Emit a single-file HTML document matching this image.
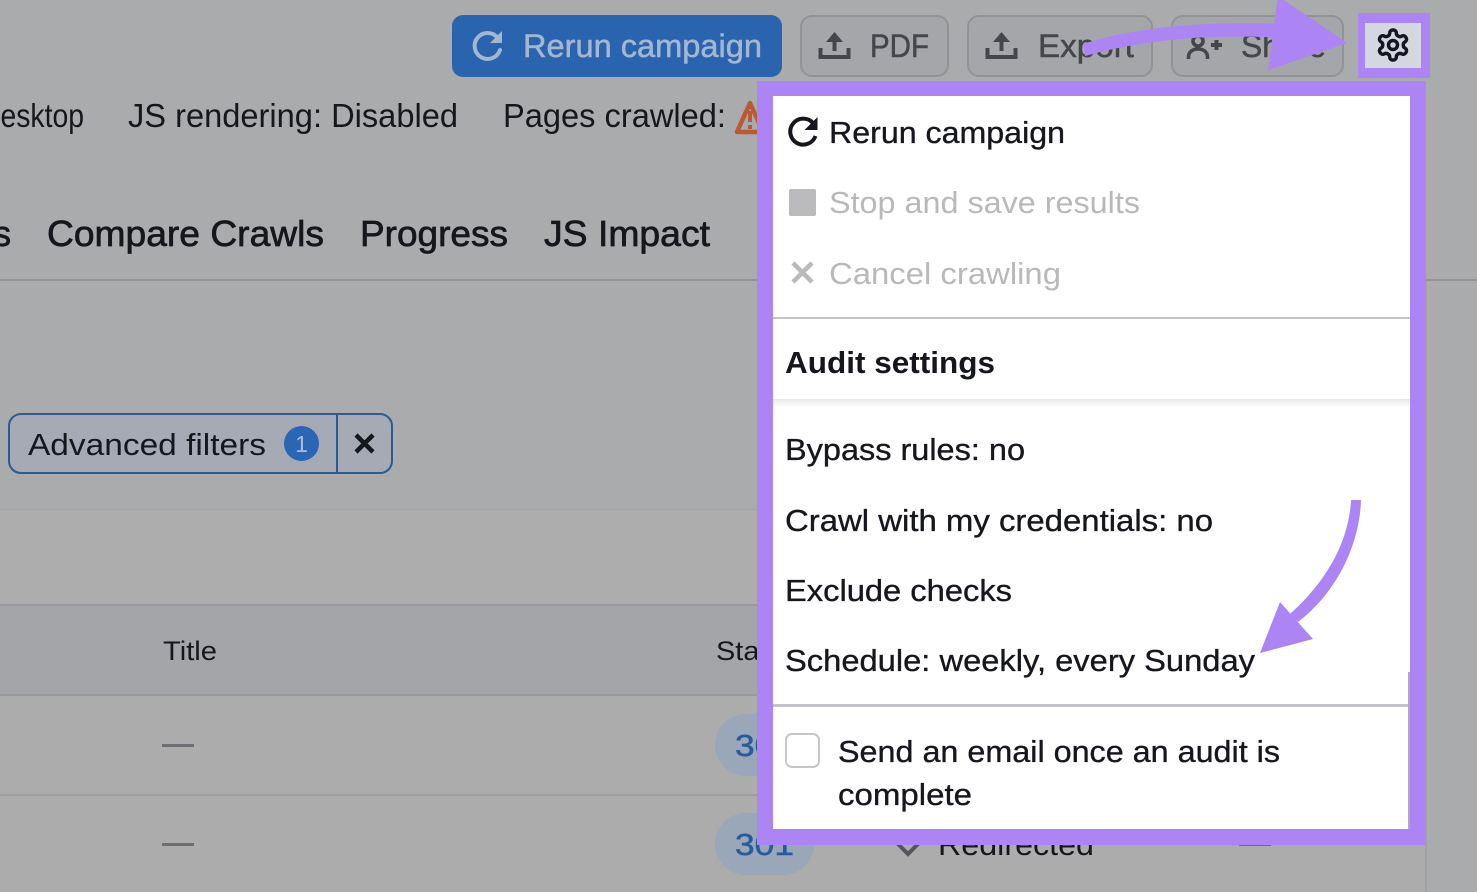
<!DOCTYPE html>
<html lang="en"><head><meta charset="utf-8"><title>Site Audit settings</title>
<style>
html,body{margin:0;padding:0;width:1477px;height:892px;overflow:hidden;background:#aaabad}
svg{display:block}
text{font-family:"Liberation Sans",Arial,sans-serif;fill:#16171d;font-size:31px}
.i{font-size:33px}
.m{stroke:#16171d;stroke-width:.35px}
.h{font-size:36px;stroke:#16171d;stroke-width:.7px}
.g{fill:#b9b9bb;font-size:31px}
.b{fill:#45464c;font-size:32px;stroke:#45464c;stroke-width:.5px}
</style></head><body>
<svg width="1477" height="892" viewBox="0 0 1477 892" xmlns="http://www.w3.org/2000/svg">
<defs><linearGradient id="sh" x1="0" y1="0" x2="0" y2="1"><stop offset="0" stop-color="#e8e8ea"/><stop offset="1" stop-color="#fff"/></linearGradient></defs>
<rect width="1477" height="892" fill="#aaabad"/>
<rect y="510" width="1426" height="95" fill="#adadae"/>
<rect y="605" width="1426" height="90" fill="#a4a5a8"/>
<rect y="695" width="1426" height="197" fill="#acacad"/>
<rect y="279" width="1477" height="2" fill="#929398"/>
<rect y="509" width="1426" height="1" fill="#a3a4a6"/>
<rect y="604" width="1426" height="2" fill="#98999d"/>
<rect y="694" width="1426" height="2" fill="#98999d"/>
<rect y="794" width="1426" height="2" fill="#9d9ea2"/>
<rect x="1425" y="281" width="2" height="611" fill="#a2a3a5"/>

<!-- Top buttons -->
<rect x="452" y="15" width="330" height="62" rx="11" fill="#2a64ae"/>
<path d="M497.500 37.500A13 13 0 1 0 500 50" fill="none" stroke="#a3b6d2" stroke-width="4" stroke-linecap="round"/>
<path d="M502 31v12h-12z" fill="#a3b6d2"/>
<text x="523" y="57" textLength="239" lengthAdjust="spacingAndGlyphs" style="font-size:32px;fill:#a3b6d2;stroke:#a3b6d2;stroke-width:.5px">Rerun campaign</text>

<rect x="801" y="16" width="147" height="60" rx="11" fill="#a5a6a9" stroke="#929396" stroke-width="2"/>
<g fill="none" stroke="#45464c" stroke-width="4"><path d="M820.500 48v9h28v-9"/><path d="M834.500 51V36"/></g><path d="M826 42l8.500-10 8.500 10z" fill="#45464c"/>
<text class="b" x="870" y="57" textLength="59" lengthAdjust="spacingAndGlyphs">PDF</text>

<rect x="968" y="16" width="184" height="60" rx="11" fill="#a5a6a9" stroke="#929396" stroke-width="2"/>
<g fill="none" stroke="#45464c" stroke-width="4"><path d="M987.500 48v9h28v-9"/><path d="M1001.500 51V36"/></g><path d="M993 42l8.500-10 8.500 10z" fill="#45464c"/>
<text class="b" x="1038" y="57" textLength="96" lengthAdjust="spacingAndGlyphs">Export</text>

<rect x="1172" y="16" width="171" height="60" rx="11" fill="#a5a6a9" stroke="#929396" stroke-width="2"/>
<g fill="none" stroke="#45464c" stroke-width="3.600"><circle cx="1198" cy="41" r="5"/><path d="M1188.500 59v-2c0-5 4-8 9.500-8s9.500 3 9.500 8v2"/><path d="M1211 45h11M1216.500 40v10" stroke-width="4"/></g>
<text class="b" x="1241" y="57" textLength="85" lengthAdjust="spacingAndGlyphs">Share</text>

<!-- Info row -->
<text class="i" x="-20" y="127" textLength="104" lengthAdjust="spacingAndGlyphs">Desktop</text>
<text class="i" x="128" y="127" textLength="330" lengthAdjust="spacingAndGlyphs">JS rendering: Disabled</text>
<text class="i" x="503" y="127" textLength="223" lengthAdjust="spacingAndGlyphs">Pages crawled:</text>
<path d="M750 103L737 132H763Z" fill="none" stroke="#b85a35" stroke-width="4.500" stroke-linejoin="round"/>
<rect x="748" y="111" width="4" height="11" fill="#b85a35"/><rect x="748" y="125" width="4" height="4" fill="#b85a35"/>

<!-- Tabs -->
<text class="h" x="-16" y="246" textLength="27" lengthAdjust="spacingAndGlyphs">ts</text>
<text class="h" x="47" y="246" textLength="277" lengthAdjust="spacingAndGlyphs">Compare Crawls</text>
<text class="h" x="360" y="246" textLength="148" lengthAdjust="spacingAndGlyphs">Progress</text>
<text class="h" x="544" y="246" textLength="166" lengthAdjust="spacingAndGlyphs">JS Impact</text>

<!-- Advanced filters -->
<rect x="9" y="414" width="383" height="59" rx="12" fill="#a5aab5" stroke="#2c5a96" stroke-width="2"/>
<rect x="336" y="414" width="2" height="59" fill="#2c5a96"/>
<text x="28" y="455" textLength="238" lengthAdjust="spacingAndGlyphs">Advanced filters</text>
<circle cx="301.500" cy="443.500" r="17.500" fill="#2a66b4"/>
<text x="301.500" y="452" text-anchor="middle" style="font-size:23px;fill:#a9bdd8">1</text>
<path d="M356 435l17 17M373 435l-17 17" stroke="#16171d" stroke-width="4.500" fill="none"/>

<!-- Table -->
<text x="163" y="660" textLength="54" lengthAdjust="spacingAndGlyphs" style="font-size:27px">Title</text>
<text x="716" y="660" textLength="82" lengthAdjust="spacingAndGlyphs" style="font-size:27px">Status</text>
<rect x="162" y="744" width="32" height="3" fill="#6e6f74"/>
<rect x="162" y="843" width="32" height="3" fill="#6e6f74"/>
<rect x="1239" y="843" width="32" height="3" fill="#6e6f74"/>
<rect x="715" y="714" width="99" height="62" rx="31" fill="#99a7b8"/>
<rect x="715" y="813" width="99" height="62" rx="31" fill="#99a7b8"/>
<text x="735" y="756" textLength="59" lengthAdjust="spacingAndGlyphs" style="fill:#2a5a9e;stroke:#2a5a9e;stroke-width:.5px">301</text>
<text x="735" y="855" textLength="59" lengthAdjust="spacingAndGlyphs" style="fill:#2a5a9e;stroke:#2a5a9e;stroke-width:.5px">301</text>
<path d="M896 842l12 12 12-12" fill="none" stroke="#55565b" stroke-width="4"/>
<text x="938" y="855" textLength="156" lengthAdjust="spacingAndGlyphs">Redirected</text>

<!-- Menu frame -->
<rect x="757" y="81" width="669" height="764" fill="#ac84f4"/>
<rect x="773" y="96" width="637" height="733" fill="#fff"/>
<rect x="773" y="399" width="637" height="8" fill="url(#sh)"/>
<rect x="773" y="317" width="637" height="2" fill="#c5c5c9"/>
<rect x="773" y="704" width="637" height="3" fill="#c5c3cc"/>
<rect x="1408" y="672" width="2" height="157" fill="#b4a8c8"/>

<path d="M813 123A13 13 0 1 0 815.500 136" fill="none" stroke="#16171d" stroke-width="4"/>
<path d="M817.500 117v13h-13z" fill="#16171d"/>
<text class="m" x="829" y="143" textLength="236" lengthAdjust="spacingAndGlyphs">Rerun campaign</text>
<rect x="789" y="189" width="27" height="27" rx="2" fill="#bababc"/>
<text class="g" x="829" y="213" textLength="311" lengthAdjust="spacingAndGlyphs">Stop and save results</text>
<path d="M793 263l19 19M812 263l-19 19" stroke="#bababc" stroke-width="4.500" fill="none"/>
<text class="g" x="829" y="284" textLength="232" lengthAdjust="spacingAndGlyphs">Cancel crawling</text>
<text x="785" y="373" textLength="210" lengthAdjust="spacingAndGlyphs" style="font-weight:700">Audit settings</text>
<text class="m" x="785" y="460" textLength="240" lengthAdjust="spacingAndGlyphs">Bypass rules: no</text>
<text class="m" x="785" y="531" textLength="428" lengthAdjust="spacingAndGlyphs">Crawl with my credentials: no</text>
<text class="m" x="785" y="601" textLength="227" lengthAdjust="spacingAndGlyphs">Exclude checks</text>
<text class="m" x="785" y="671" textLength="470" lengthAdjust="spacingAndGlyphs">Schedule: weekly, every Sunday</text>
<rect x="786" y="734" width="33" height="33" rx="6" fill="#fff" stroke="#c7c7ca" stroke-width="2"/>
<text class="m" x="838" y="762" textLength="442" lengthAdjust="spacingAndGlyphs">Send an email once an audit is</text>
<text class="m" x="838" y="805" textLength="134" lengthAdjust="spacingAndGlyphs">complete</text>

<!-- Gear -->
<rect x="1358" y="13" width="72" height="65" fill="#ac84f4"/>
<rect x="1365" y="23" width="56" height="45" fill="#d4d6e0"/>
<g transform="translate(1375 27) scale(1.5)" fill="none" stroke="#16171d" stroke-width="2.300" stroke-linejoin="round">
<path d="M12.220 2h-.44a2 2 0 0 0-2 2v.18a2 2 0 0 1-1 1.730l-.43.25a2 2 0 0 1-2 0l-.15-.08a2 2 0 0 0-2.730.73l-.22.38a2 2 0 0 0 .73 2.730l.15.1a2 2 0 0 1 1 1.720v.51a2 2 0 0 1-1 1.740l-.15.09a2 2 0 0 0-.73 2.730l.22.38a2 2 0 0 0 2.730.73l.15-.08a2 2 0 0 1 2 0l.43.25a2 2 0 0 1 1 1.730V20a2 2 0 0 0 2 2h.44a2 2 0 0 0 2-2v-.18a2 2 0 0 1 1-1.730l.43-.25a2 2 0 0 1 2 0l.15.08a2 2 0 0 0 2.730-.73l.22-.39a2 2 0 0 0-.73-2.730l-.15-.08a2 2 0 0 1-1-1.740v-.5a2 2 0 0 1 1-1.740l.15-.09a2 2 0 0 0 .73-2.730l-.22-.38a2 2 0 0 0-2.730-.73l-.15.08a2 2 0 0 1-2 0l-.43-.25a2 2 0 0 1-1-1.730V4a2 2 0 0 0-2-2z"/>
<circle cx="12" cy="12" r="3"/></g>

<!-- Arrows -->
<path d="M1083 44C1140 26 1210 21 1290 24L1288 38C1215 34 1150 38 1085 56Z" fill="#ac84f4"/>
<path d="M1278-4L1347 43 1268 70Z" fill="#ac84f4"/>
<path d="M1351 500h10C1360 540 1340 590 1298 622L1290 614C1328 580 1349 540 1351 500Z" fill="#ac84f4"/>
<path d="M1280 602L1313 639 1260 653Z" fill="#ac84f4"/>
</svg>
</body></html>
